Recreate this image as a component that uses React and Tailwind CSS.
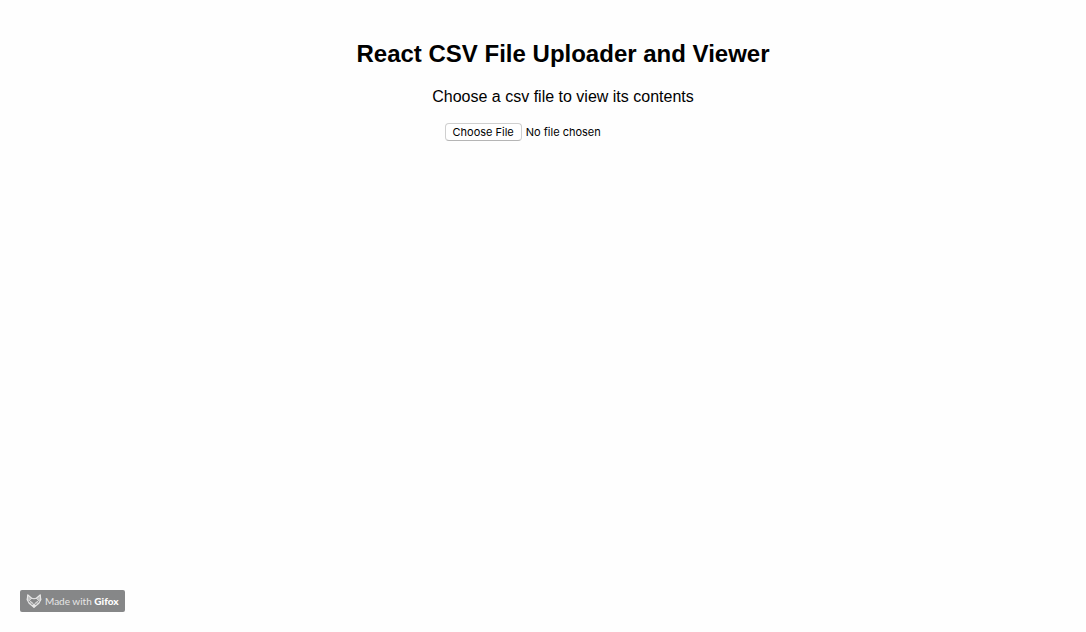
function FoxIcon() {
  return (
    <svg viewBox="0 0 16 14" className="h-3.5 w-4 shrink-0" fill="none" stroke="#e6e6e6" strokeWidth="1.1" strokeLinejoin="round" aria-hidden="true">
      <path d="M1.8 0.8 L5.8 4.3 L8 4.8 L10.2 4.3 L14.2 0.8 L14.8 5.8 L12.9 9.2 L8 13.2 L3.1 9.2 L1.2 5.8 Z" />
      <path d="M1.8 0.8 L5.8 4.3 L3.4 6.6 L1.2 5.8 Z M14.2 0.8 L10.2 4.3 L12.6 6.6 L14.8 5.8 Z" fill="#e6e6e6" fillOpacity="0.6" strokeWidth="0.7" />
      <path d="M3.4 6.6 L6.4 8.8 L8 11.4 L9.6 8.8 L12.6 6.6 M3.1 9.2 L6.4 8.8 M12.9 9.2 L9.6 8.8" strokeWidth="0.9" />
      <path d="M6.4 11.2 H9.6 L8 13.2 Z" fill="#f2f2f2" />
    </svg>
  );
}

export default function App() {
  return (
    <div className="flex min-h-screen flex-col bg-[#fefefe] font-['Liberation_Sans',Arial,sans-serif] text-black">
      <main className="flex grow flex-col items-center pt-10 pl-10">
        <h1 className="text-2xl leading-7 font-bold">React CSV File Uploader and Viewer</h1>
        <label htmlFor="csv-file" className="mt-5 text-base leading-[18px]">
          Choose a csv file to view its contents
        </label>
        <input
          id="csv-file"
          type="file"
          accept=".csv"
          className="mt-[17px] w-[237px] font-['Inter',sans-serif] text-[11px] leading-4 file:mr-1 file:h-[18px] file:rounded-sm file:border file:border-solid file:border-[#cfcfcf] file:border-b-[#b5b5b5] file:bg-white file:px-[7px] file:font-['Inter',sans-serif] file:text-[11px] file:leading-4 file:font-normal"
        />
      </main>
      <footer className="flex px-5 pb-5">
        <div className="flex h-[22px] items-center gap-[3px] rounded-xs bg-[#868788] px-1.5 font-['Lato',sans-serif] text-[10px] leading-3 text-[#e6e6e6]">
          <FoxIcon />
          <span>
            Made with <strong className="font-black text-white">Gifox</strong>
          </span>
        </div>
      </footer>
    </div>
  );
}
